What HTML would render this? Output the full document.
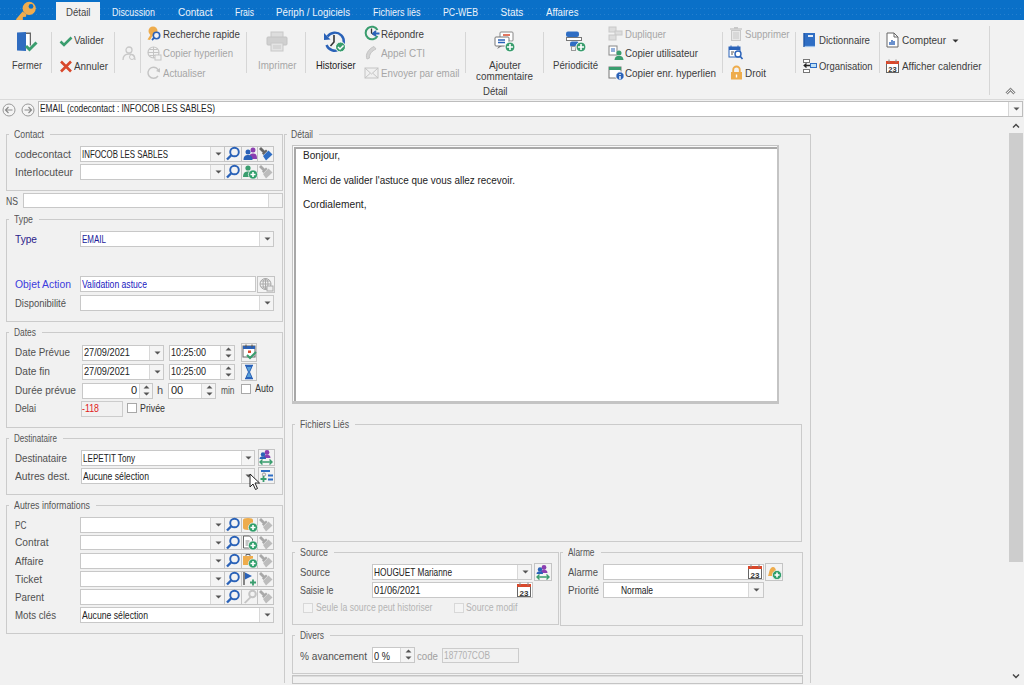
<!DOCTYPE html>
<html><head><meta charset="utf-8"><style>
html,body{margin:0;padding:0}
body{width:1024px;height:685px;overflow:hidden;position:relative;background:#f1f1f1;font-family:"Liberation Sans",sans-serif}
.a{position:absolute;display:block}
.t{position:absolute;white-space:nowrap;line-height:20px;transform-origin:0 0;font-family:"Liberation Sans",sans-serif}
</style></head><body>
<div class="a" style="left:0px;top:0px;width:1024px;height:20px;background:#0a70c8;"></div>
<div class="a" style="left:0px;top:8px;width:1024px;height:1px;background:repeating-linear-gradient(90deg,#2580cf 0 1px,transparent 1px 4px);"></div>
<div class="a" style="left:0px;top:14px;width:1024px;height:1px;background:repeating-linear-gradient(90deg,#2580cf 0 1px,transparent 1px 4px);"></div>
<div class="a" style="left:56px;top:2px;width:44px;height:18px;background:#f2f2f2;"></div>
<svg class="a" style="left:12px;top:0px" width="30" height="22" viewBox="0 0 30 22"><circle cx="17.2" cy="8.3" r="6.6" fill="#efac4e"/><circle cx="19" cy="6.4" r="2.4" fill="#0a70c8"/><path d="M10.6 11.5 L4.2 19 L4.2 21 L10.8 21 L10.9 17 L14 16.8 L14.3 14.3z" fill="#efac4e"/></svg>
<span class="t" style="left:65.5px;top:3px;font-size:10px;color:#444;transform:scaleX(0.9584);">Détail</span>
<span class="t" style="left:112px;top:3px;font-size:10px;color:#eef4fb;transform:scaleX(0.8895);">Discussion</span>
<span class="t" style="left:178px;top:3px;font-size:10px;color:#eef4fb;">Contact</span>
<span class="t" style="left:235px;top:3px;font-size:10px;color:#eef4fb;transform:scaleX(0.8551);">Frais</span>
<span class="t" style="left:276px;top:3px;font-size:10px;color:#eef4fb;transform:scaleX(0.9717);">Périph / Logiciels</span>
<span class="t" style="left:372.5px;top:3px;font-size:10px;color:#eef4fb;transform:scaleX(0.8999);">Fichiers liés</span>
<span class="t" style="left:442.5px;top:3px;font-size:10px;color:#eef4fb;transform:scaleX(0.8750);">PC-WEB</span>
<span class="t" style="left:500.5px;top:3px;font-size:10px;color:#eef4fb;">Stats</span>
<span class="t" style="left:545.5px;top:3px;font-size:10px;color:#eef4fb;transform:scaleX(0.9639);">Affaires</span>
<div class="a" style="left:0px;top:20px;width:1024px;height:79px;background:#f2f2f2;"></div>
<div class="a" style="left:0px;top:99px;width:1024px;height:1px;background:#dadada;"></div>
<div class="a" style="left:0px;top:100px;width:1024px;height:18px;background:#f1f1f1;"></div>
<div class="a" style="left:51px;top:32px;width:1px;height:41px;background:#d6d6d6;"></div>
<div class="a" style="left:114px;top:32px;width:1px;height:41px;background:#d6d6d6;"></div>
<div class="a" style="left:140px;top:32px;width:1px;height:41px;background:#d6d6d6;"></div>
<div class="a" style="left:246px;top:32px;width:1px;height:41px;background:#d6d6d6;"></div>
<div class="a" style="left:305px;top:32px;width:1px;height:41px;background:#d6d6d6;"></div>
<div class="a" style="left:465px;top:32px;width:1px;height:41px;background:#d6d6d6;"></div>
<div class="a" style="left:543px;top:32px;width:1px;height:41px;background:#d6d6d6;"></div>
<div class="a" style="left:722px;top:32px;width:1px;height:41px;background:#d6d6d6;"></div>
<div class="a" style="left:795px;top:32px;width:1px;height:41px;background:#d6d6d6;"></div>
<div class="a" style="left:879px;top:32px;width:1px;height:41px;background:#d6d6d6;"></div>
<div class="a" style="left:989px;top:26px;width:1px;height:69px;background:#d6d6d6;"></div>
<svg class="a" style="left:16px;top:31px" width="23" height="22" viewBox="0 0 23 22"><path d="M10 1.5h5v13h-1.5v-11.5h-3.5z" fill="#666"/><rect x="10" y="3" width="3.5" height="12" fill="#fff"/><path d="M1 1.5 L10 1 L10 20 L1 19.5z" fill="#2f6cc0"/><path d="M10 15 L13.5 18.5 L20.5 11.5" stroke="#3a9d6e" stroke-width="3" fill="none"/></svg>
<span class="t" style="left:12px;top:55px;font-size:11px;color:#3c3c3c;transform:scaleX(0.8466);">Fermer</span>
<svg class="a" style="left:59px;top:35px" width="14" height="12" viewBox="0 0 14 12"><path d="M1.5 6.5 L5 10 L12.5 2.5" stroke="#3a9d6e" stroke-width="2.6" fill="none"/></svg>
<span class="t" style="left:74px;top:30px;font-size:11px;color:#3c3c3c;transform:scaleX(0.8972);">Valider</span>
<svg class="a" style="left:59px;top:60px" width="14" height="13" viewBox="0 0 14 13"><path d="M2 1.5 L12 11.5 M12 1.5 L2 11.5" stroke="#d9482b" stroke-width="2.6" fill="none"/></svg>
<span class="t" style="left:74px;top:56px;font-size:11px;color:#3c3c3c;transform:scaleX(0.8962);">Annuler</span>
<svg class="a" style="left:121px;top:46px" width="16" height="15" viewBox="0 0 16 15"><circle cx="8" cy="4" r="3" fill="none" stroke="#c8c8c8" stroke-width="1.3"/><path d="M2 14 C2 9 5 8 8 8 C11 8 14 9 14 14" fill="none" stroke="#c8c8c8" stroke-width="1.3"/><circle cx="11" cy="11" r="2.5" fill="none" stroke="#c8c8c8"/></svg>
<svg class="a" style="left:147px;top:26px" width="15" height="15" viewBox="0 0 15 15"><circle cx="6" cy="5" r="4.5" fill="#eeac4c"/><path d="M4 8 L0.5 13.5 L3 14 L6 9z" fill="#eeac4c"/><circle cx="9.5" cy="9.5" r="3.2" fill="#f2f2f2" stroke="#2a62b8" stroke-width="1.6"/><path d="M7.3 11.7 L5 14" stroke="#2a62b8" stroke-width="1.8"/></svg>
<span class="t" style="left:163px;top:24px;font-size:11px;color:#3c3c3c;transform:scaleX(0.8863);">Recherche rapide</span>
<svg class="a" style="left:147px;top:46px" width="15" height="15" viewBox="0 0 15 15"><circle cx="6.5" cy="6.5" r="5.5" fill="none" stroke="#c4c4c4" stroke-width="1.2"/><path d="M6.5 1v11 M1 6.5h11 M2.5 3.5h8 M2.5 9.5h8" stroke="#c4c4c4"/><rect x="8" y="9" width="6" height="5" fill="#f2f2f2" stroke="#c4c4c4"/></svg>
<span class="t" style="left:163px;top:43px;font-size:11px;color:#a6a6a6;transform:scaleX(0.8736);">Copier hyperlien</span>
<svg class="a" style="left:147px;top:66px" width="15" height="15" viewBox="0 0 15 15"><path d="M12 6 A5.5 5.5 0 1 0 11 10" fill="none" stroke="#c4c4c4" stroke-width="1.4"/><path d="M9 5 L13 6.5 L13 2z" fill="#c4c4c4"/></svg>
<span class="t" style="left:163px;top:63px;font-size:11px;color:#a6a6a6;transform:scaleX(0.8797);">Actualiser</span>
<svg class="a" style="left:266px;top:31px" width="22" height="21" viewBox="0 0 22 21"><rect x="5" y="1" width="12" height="6" fill="#ddd" stroke="#c8c8c8"/><rect x="1" y="6" width="20" height="8" rx="1" fill="#d0d0d0" stroke="#c4c4c4"/><rect x="5" y="12" width="12" height="8" fill="#e4e4e4" stroke="#c8c8c8"/><path d="M7 15h8 M7 17h8" stroke="#c8c8c8"/></svg>
<span class="t" style="left:257.5px;top:55px;font-size:11px;color:#a6a6a6;transform:scaleX(0.8876);">Imprimer</span>
<svg class="a" style="left:323px;top:30px" width="24" height="24" viewBox="0 0 24 24"><path d="M4.5 6.5 A9 9 0 1 1 3.5 15" fill="none" stroke="#2a62b8" stroke-width="2.4"/><path d="M1 3 L7.5 9.5 L1 10z" fill="#2a62b8"/><path d="M11 5v7l-3.5 4" stroke="#333" stroke-width="1.6" fill="none"/><circle cx="17.5" cy="17" r="5" fill="#3a9d6e" stroke="#fff" stroke-width="1"/><path d="M15 17l2 2 3.5-3.5" stroke="#fff" stroke-width="1.5" fill="none"/></svg>
<span class="t" style="left:316px;top:55px;font-size:11px;color:#222;transform:scaleX(0.8506);">Historiser</span>
<svg class="a" style="left:364px;top:25px" width="16" height="16" viewBox="0 0 16 16"><path d="M13.5 5 A6.3 6.3 0 1 0 13.5 11" fill="none" stroke="#3a9d6e" stroke-width="2"/><path d="M7.5 3.5v4.5l2.5 2" stroke="#333" stroke-width="1.3" fill="none"/><path d="M15.5 8.5h-6 M12 6 L9 8.5 L12 11" stroke="#2a62b8" stroke-width="1.8" fill="none"/></svg>
<span class="t" style="left:381px;top:24px;font-size:11px;color:#3c3c3c;transform:scaleX(0.8895);">Répondre</span>
<svg class="a" style="left:364px;top:45px" width="16" height="16" viewBox="0 0 16 16"><path d="M3 14 C1 10 4 4 10 1.5 L12 4 C8 6 5 9 5.5 13z" fill="#d4d4d4" stroke="#c4c4c4"/></svg>
<span class="t" style="left:381px;top:43px;font-size:11px;color:#a6a6a6;transform:scaleX(0.8991);">Appel CTI</span>
<svg class="a" style="left:364px;top:66px" width="16" height="14" viewBox="0 0 16 14"><rect x="1" y="2" width="13" height="10" fill="#f0f0f0" stroke="#c4c4c4"/><path d="M1 2l6.5 6 6.5-6 M1 12l5-4.5 M14 12l-5-4.5" fill="none" stroke="#c4c4c4"/></svg>
<span class="t" style="left:381px;top:63px;font-size:11px;color:#a6a6a6;transform:scaleX(0.8851);">Envoyer par email</span>
<svg class="a" style="left:493px;top:30px" width="23" height="23" viewBox="0 0 23 23"><rect x="7" y="2" width="13" height="9" rx="1" fill="#fff" stroke="#888"/><path d="M10 5h7" stroke="#d9482b" stroke-width="1.5"/><rect x="2" y="7" width="14" height="9" rx="1" fill="#fff" stroke="#777"/><path d="M4 19l2-3h3z" fill="#777"/><path d="M5 10h7 M5 12.5h7" stroke="#2a62b8" stroke-width="1.3"/><circle cx="17" cy="17" r="5" fill="#3a9d6e" stroke="#fff"/><path d="M17 14v6 M14 17h6" stroke="#fff" stroke-width="1.6"/></svg>
<span class="t" style="left:489px;top:55px;font-size:11px;color:#3c3c3c;transform:scaleX(0.9176);">Ajouter</span>
<span class="t" style="left:476px;top:66px;font-size:11px;color:#3c3c3c;transform:scaleX(0.8963);">commentaire</span>
<span class="t" style="left:482.5px;top:81px;font-size:11px;color:#3c3c3c;transform:scaleX(0.8711);">Détail</span>
<svg class="a" style="left:564px;top:30px" width="23" height="23" viewBox="0 0 23 23"><rect x="2" y="1.5" width="13" height="5.5" rx="2" fill="#2f6ec4"/><rect x="2.5" y="7.5" width="15" height="3" fill="#fff" stroke="#777"/><rect x="6" y="11.5" width="9" height="5.5" rx="2" fill="#2f6ec4"/><rect x="7.5" y="16.5" width="4" height="4" fill="none" stroke="#999"/><circle cx="17" cy="17" r="5" fill="#3a9d6e" stroke="#fff"/><path d="M17 14v6 M14 17h6" stroke="#fff" stroke-width="1.6"/></svg>
<span class="t" style="left:553px;top:55px;font-size:11px;color:#3c3c3c;transform:scaleX(0.8759);">Périodicité</span>
<svg class="a" style="left:608px;top:26px" width="16" height="15" viewBox="0 0 16 15"><rect x="1" y="1" width="7" height="5" fill="#ddd" stroke="#c8c8c8"/><rect x="7" y="5" width="7" height="4" fill="#ddd" stroke="#c8c8c8"/><rect x="1" y="9" width="7" height="5" fill="#ddd" stroke="#c8c8c8"/></svg>
<span class="t" style="left:624.5px;top:24px;font-size:11px;color:#a6a6a6;transform:scaleX(0.8706);">Dupliquer</span>
<svg class="a" style="left:608px;top:45px" width="16" height="16" viewBox="0 0 16 16"><rect x="1" y="1" width="8" height="9" fill="#fff" stroke="#888"/><path d="M3 4h4M3 6h4" stroke="#2a62b8"/><circle cx="11" cy="8" r="2.5" fill="#3a9d6e"/><path d="M6.5 15 C7 11 9 11 11 11 C13 11 15 11 15.5 15z" fill="#3a9d6e"/></svg>
<span class="t" style="left:624.5px;top:43px;font-size:11px;color:#3c3c3c;transform:scaleX(0.8842);">Copier utilisateur</span>
<svg class="a" style="left:608px;top:65px" width="17" height="16" viewBox="0 0 17 16"><rect x="1" y="2" width="12" height="11" fill="#fff" stroke="#777"/><rect x="1" y="2" width="12" height="3" fill="#3a9d6e"/><circle cx="12" cy="11" r="4.2" fill="#2a62b8" stroke="#fff"/><path d="M12 9v1 M12 11v3" stroke="#fff" stroke-width="1.4"/></svg>
<span class="t" style="left:624.5px;top:63px;font-size:11px;color:#3c3c3c;transform:scaleX(0.8961);">Copier enr. hyperlien</span>
<svg class="a" style="left:729px;top:26px" width="14" height="15" viewBox="0 0 14 15"><path d="M1 3h12" stroke="#c8c8c8" stroke-width="1.4"/><rect x="5" y="1" width="4" height="2" fill="#c8c8c8"/><rect x="2.5" y="4.5" width="9" height="10" fill="#e8e8e8" stroke="#c8c8c8"/><path d="M5 6v7 M7 6v7 M9 6v7" stroke="#c8c8c8"/></svg>
<span class="t" style="left:745px;top:24px;font-size:11px;color:#a6a6a6;transform:scaleX(0.8768);">Supprimer</span>
<svg class="a" style="left:728px;top:45px" width="16" height="15" viewBox="0 0 16 15"><rect x="1" y="2" width="11" height="10" fill="#fff" stroke="#2a62b8"/><rect x="1" y="2" width="11" height="3" fill="#2a62b8"/><path d="M3 0.5v3 M10 0.5v3" stroke="#2a62b8"/><path d="M3 7h3 M3 9h2" stroke="#555"/><circle cx="10" cy="9" r="3" fill="#fff" stroke="#2a62b8" stroke-width="1.4"/><path d="M12 11l2.5 3" stroke="#2a62b8" stroke-width="1.6"/></svg>
<svg class="a" style="left:730px;top:65px" width="13" height="15" viewBox="0 0 13 15"><path d="M3.2 7V4.8a3.3 3.3 0 0 1 6.6 0V7" fill="none" stroke="#eeac4c" stroke-width="1.8"/><rect x="1" y="7" width="11" height="7.5" fill="#eeac4c"/><path d="M6.5 9.5v3" stroke="#fff" stroke-width="1.4"/></svg>
<span class="t" style="left:745px;top:63px;font-size:11px;color:#3c3c3c;transform:scaleX(0.9044);">Droit</span>
<svg class="a" style="left:802px;top:32px" width="14" height="16" viewBox="0 0 14 16"><rect x="2" y="1" width="11" height="13" fill="#2f6ec4"/><path d="M2.5 14.5h10.5" stroke="#9cc0ea" stroke-width="1.2"/><path d="M2 1v14" stroke="#1f57a8" stroke-width="1.4"/><rect x="6" y="3" width="5" height="2" fill="#dfeaf8"/></svg>
<span class="t" style="left:818.5px;top:30px;font-size:11px;color:#3c3c3c;transform:scaleX(0.8779);">Dictionnaire</span>
<svg class="a" style="left:802px;top:58px" width="15" height="16" viewBox="0 0 15 16"><rect x="1.5" y="1.5" width="6" height="3" fill="#fff" stroke="#777"/><rect x="1.5" y="11.5" width="6" height="3" fill="#fff" stroke="#777"/><rect x="8.5" y="5.5" width="6" height="4" fill="#bfe0f5" stroke="#2f6ec4"/><path d="M8 7.5H2.5 M4.5 5.5L2.2 7.5 4.5 9.5" stroke="#222" stroke-width="1.3" fill="none"/></svg>
<span class="t" style="left:818.5px;top:56px;font-size:11px;color:#3c3c3c;transform:scaleX(0.8573);">Organisation</span>
<svg class="a" style="left:886px;top:32px" width="13" height="16" viewBox="0 0 13 16"><path d="M1 1h7l4 4v10H1z" fill="#fff" stroke="#666"/><path d="M8 1v4h4" fill="none" stroke="#666"/><path d="M4 13v-3 M6 13v-5 M8 13v-4" stroke="#2a62b8" stroke-width="1.4"/></svg>
<span class="t" style="left:901.5px;top:30px;font-size:11px;color:#3c3c3c;transform:scaleX(0.9107);">Compteur</span>
<svg class="a" style="left:952px;top:39px" width="7" height="4" viewBox="0 0 7 4"><path d="M0.5 0.5h6l-3 3z" fill="#333"/></svg>
<svg class="a" style="left:885px;top:59px" width="15" height="15" viewBox="0 0 15 15"><rect x="1.5" y="2.5" width="12" height="11" fill="#fff" stroke="#666"/><rect x="1" y="2" width="13" height="3" fill="#d9482b"/><path d="M4 0.5v3 M11 0.5v3" stroke="#888"/><text x="7.5" y="12.6" font-size="7.5" font-weight="bold" font-family="Liberation Sans" text-anchor="middle" fill="#333">23</text></svg>
<span class="t" style="left:901.5px;top:56px;font-size:11px;color:#3c3c3c;transform:scaleX(0.8985);">Afficher calendrier</span>
<svg class="a" style="left:1005px;top:86px" width="11" height="10" viewBox="0 0 11 10"><path d="M1.5 7.5l4-4 4 4" stroke="#8a8a8a" stroke-width="3" fill="none"/><path d="M1.5 7.5l4-4 4 4" stroke="#f2f2f2" stroke-width="1" fill="none"/></svg>
<svg class="a" style="left:2px;top:102.5px" width="14" height="14" viewBox="0 0 14 14"><circle cx="7" cy="7" r="6" fill="#f4f4f4" stroke="#9a9a9a"/><path d="M10.5 7h-7 M6.5 4l-3 3 3 3" stroke="#8a8a8a" stroke-width="1.2" fill="none"/></svg>
<svg class="a" style="left:21px;top:103px" width="14" height="14" viewBox="0 0 14 14"><circle cx="7" cy="7" r="6" fill="#f4f4f4" stroke="#9a9a9a"/><path d="M3.5 7h7 M7.5 4l3 3-3 3" stroke="#8a8a8a" stroke-width="1.2" fill="none"/></svg>
<div class="a" style="left:38px;top:101px;width:985px;height:16px;background:#fff;box-shadow:inset 0 0 0 1px #bdbdbd;"></div>
<div class="a" style="left:1009px;top:102px;width:13px;height:14px;background:#f6f6f6;"></div>
<div class="a" style="left:1008px;top:102px;width:1px;height:14px;background:#d6d6d6;"></div>
<svg class="a" style="left:1013px;top:107px" width="7" height="4" viewBox="0 0 7 4"><path d="M0.5 0.5h6l-3 3z" fill="#555"/></svg>
<span class="t" style="left:40px;top:99px;font-size:10px;color:#222;transform:scaleX(0.8321);">EMAIL (codecontact : INFOCOB LES SABLES)</span>
<div class="a" style="left:0px;top:117px;width:1009px;height:568px;background:#f1f1f1;"></div>
<div class="a" style="left:1009px;top:117px;width:15px;height:568px;background:#f1f1f1;"></div>
<div class="a" style="left:1009px;top:133px;width:14px;height:429px;background:#cdcdcd;"></div>
<svg class="a" style="left:1012px;top:122px" width="8" height="7" viewBox="0 0 8 7"><path d="M1 5.5l3-3 3 3" stroke="#444" stroke-width="1.4" fill="none"/></svg>
<svg class="a" style="left:1012px;top:673px" width="8" height="7" viewBox="0 0 8 7"><path d="M1 1.5l3 3 3-3" stroke="#444" stroke-width="1.4" fill="none"/></svg>
<div class="a" style="left:6px;top:134px;width:277px;height:57px;box-shadow:inset 0 0 0 1px #cbcbcb;"></div>
<div class="a" style="left:9px;top:134px;width:41px;height:1px;background:#f1f1f1;"></div>
<span class="t" style="left:14px;top:125px;font-size:10px;color:#555;transform:scaleX(0.8704);">Contact</span>
<span class="t" style="left:15px;top:144px;font-size:11px;color:#505050;transform:scaleX(0.9432);">codecontact</span>
<div class="a" style="left:80px;top:146px;width:145px;height:16px;background:#fff;box-shadow:inset 0 0 0 1px #c8c8c8;"></div>
<div class="a" style="left:210px;top:147px;width:14px;height:14px;background:#f4f4f4;"></div>
<div class="a" style="left:210px;top:147px;width:1px;height:14px;background:#d8d8d8;"></div>
<svg class="a" style="left:215px;top:152px" width="7" height="4" viewBox="0 0 7 4"><path d="M0.5 0.5h6l-3 3z" fill="#555"/></svg>
<div class="a" style="left:224px;top:146px;width:18px;height:16px;background:#f3f3f3;box-shadow:inset 0 0 0 1px #c4c4c4;"></div>
<div class="a" style="left:241px;top:146px;width:17px;height:16px;background:#f3f3f3;box-shadow:inset 0 0 0 1px #c4c4c4;"></div>
<div class="a" style="left:257px;top:146px;width:17px;height:16px;background:#f3f3f3;box-shadow:inset 0 0 0 1px #c4c4c4;"></div>
<svg class="a" style="left:225px;top:146px" width="16" height="15" viewBox="0 0 16 15"><circle cx="9.5" cy="6" r="4.3" fill="none" stroke="#2a62b8" stroke-width="1.9"/><path d="M6.5 9 L2 13.5" stroke="#2a62b8" stroke-width="2.4"/></svg>
<svg class="a" style="left:242px;top:146px" width="16" height="15" viewBox="0 0 16 15"><circle cx="11" cy="4" r="2.5" fill="#8b3fb0"/><path d="M7 13 C7 8 9 7.5 11 7.5 C13 7.5 15 8 15 13z" fill="#8b3fb0"/><circle cx="6" cy="6" r="2.5" fill="#2a62b8"/><path d="M1.5 14 C1.5 10 3.5 9 6 9 C8.5 9 10.5 10 10.5 14z" fill="#2a62b8"/></svg>
<svg class="a" style="left:258px;top:146px" width="16" height="15" viewBox="0 0 16 15"><path d="M1 3 L3 1 L7.5 5.5 L5.5 7.5z" fill="#666"/><path d="M4 7.5 L8 3.5 L9.5 5 L5.5 9z" fill="#666"/><path d="M5 10 L10.5 4.5 L14.5 8.5 L8 14.5z" fill="#2f6ec4"/></svg>
<span class="t" style="left:82px;top:144px;font-size:11px;color:#222;transform:scaleX(0.7172);">INFOCOB LES SABLES</span>
<span class="t" style="left:15px;top:162px;font-size:11px;color:#505050;transform:scaleX(0.9479);">Interlocuteur</span>
<div class="a" style="left:80px;top:164px;width:145px;height:16px;background:#fff;box-shadow:inset 0 0 0 1px #c8c8c8;"></div>
<div class="a" style="left:210px;top:165px;width:14px;height:14px;background:#f4f4f4;"></div>
<div class="a" style="left:210px;top:165px;width:1px;height:14px;background:#d8d8d8;"></div>
<svg class="a" style="left:215px;top:170px" width="7" height="4" viewBox="0 0 7 4"><path d="M0.5 0.5h6l-3 3z" fill="#555"/></svg>
<div class="a" style="left:224px;top:164px;width:18px;height:16px;background:#f3f3f3;box-shadow:inset 0 0 0 1px #c4c4c4;"></div>
<div class="a" style="left:241px;top:164px;width:17px;height:16px;background:#f3f3f3;box-shadow:inset 0 0 0 1px #c4c4c4;"></div>
<div class="a" style="left:257px;top:164px;width:17px;height:16px;background:#f3f3f3;box-shadow:inset 0 0 0 1px #c4c4c4;"></div>
<svg class="a" style="left:225px;top:164px" width="16" height="15" viewBox="0 0 16 15"><circle cx="9.5" cy="6" r="4.3" fill="none" stroke="#2a62b8" stroke-width="1.9"/><path d="M6.5 9 L2 13.5" stroke="#2a62b8" stroke-width="2.4"/></svg>
<svg class="a" style="left:242px;top:164px" width="16" height="15" viewBox="0 0 16 15"><circle cx="6" cy="4" r="2.6" fill="#3a9d6e"/><path d="M1 13 C1 8.5 3.5 7.5 6 7.5 C8 7.5 9 8 9.5 9 L8 13z" fill="#3a9d6e"/><circle cx="11" cy="10.5" r="4.6" fill="#2e9e6a" stroke="#f3f3f3" stroke-width="0.8"/><path d="M11 8v5 M8.5 10.5h5" stroke="#fff" stroke-width="1.6"/></svg>
<svg class="a" style="left:258px;top:164px" width="16" height="15" viewBox="0 0 16 15"><path d="M1 3 L3 1 L7.5 5.5 L5.5 7.5z" fill="#a8a8a8"/><path d="M4 7.5 L8 3.5 L9.5 5 L5.5 9z" fill="#a8a8a8"/><path d="M5 10 L10.5 4.5 L14.5 8.5 L8 14.5z" fill="#bcbcbc"/></svg>
<span class="t" style="left:6px;top:191px;font-size:11px;color:#505050;transform:scaleX(0.7853);">NS</span>
<div class="a" style="left:23px;top:193px;width:260px;height:15px;background:#fff;box-shadow:inset 0 0 0 1px #c8c8c8;"></div>
<div class="a" style="left:268px;top:194px;width:14px;height:13px;background:#f4f4f4;"></div>
<div class="a" style="left:268px;top:194px;width:1px;height:13px;background:#d8d8d8;"></div>
<div class="a" style="left:6px;top:219px;width:277px;height:103px;box-shadow:inset 0 0 0 1px #cbcbcb;"></div>
<div class="a" style="left:9px;top:219px;width:30px;height:1px;background:#f1f1f1;"></div>
<span class="t" style="left:14px;top:210px;font-size:10px;color:#555;transform:scaleX(0.8761);">Type</span>
<span class="t" style="left:15px;top:229px;font-size:11px;color:#2a1a8a;transform:scaleX(0.9221);">Type</span>
<div class="a" style="left:80px;top:231px;width:194px;height:16px;background:#fff;box-shadow:inset 0 0 0 1px #c8c8c8;"></div>
<div class="a" style="left:259px;top:232px;width:14px;height:14px;background:#f4f4f4;"></div>
<div class="a" style="left:259px;top:232px;width:1px;height:14px;background:#d8d8d8;"></div>
<svg class="a" style="left:264px;top:237px" width="7" height="4" viewBox="0 0 7 4"><path d="M0.5 0.5h6l-3 3z" fill="#555"/></svg>
<span class="t" style="left:82px;top:229px;font-size:11px;color:#1a1a9a;transform:scaleX(0.7266);">EMAIL</span>
<span class="t" style="left:15px;top:274px;font-size:11px;color:#3b3bdd;transform:scaleX(0.9434);">Objet Action</span>
<div class="a" style="left:80px;top:276px;width:176px;height:16px;background:#fff;box-shadow:inset 0 0 0 1px #c8c8c8;"></div>
<span class="t" style="left:82px;top:274px;font-size:11px;color:#2020c0;transform:scaleX(0.7828);">Validation astuce</span>
<div class="a" style="left:257px;top:276px;width:18px;height:17px;background:#f3f3f3;box-shadow:inset 0 0 0 1px #c4c4c4;"></div>
<svg class="a" style="left:258px;top:277px" width="16" height="15" viewBox="0 0 16 15"><circle cx="7.5" cy="7" r="5.5" fill="none" stroke="#aaa"/><path d="M7.5 1.5v11 M2 7h11 M3 4h9 M3 10h9" stroke="#aaa" fill="none"/><ellipse cx="7.5" cy="7" rx="2.5" ry="5.5" fill="none" stroke="#aaa"/><rect x="9" y="9" width="6" height="5" fill="#ededed" stroke="#aaa"/></svg>
<span class="t" style="left:15px;top:293px;font-size:11px;color:#505050;transform:scaleX(0.8599);">Disponibilité</span>
<div class="a" style="left:80px;top:295px;width:194px;height:16px;background:#fff;box-shadow:inset 0 0 0 1px #c8c8c8;"></div>
<div class="a" style="left:259px;top:296px;width:14px;height:14px;background:#f4f4f4;"></div>
<div class="a" style="left:259px;top:296px;width:1px;height:14px;background:#d8d8d8;"></div>
<svg class="a" style="left:264px;top:301px" width="7" height="4" viewBox="0 0 7 4"><path d="M0.5 0.5h6l-3 3z" fill="#555"/></svg>
<div class="a" style="left:6px;top:332px;width:277px;height:96px;box-shadow:inset 0 0 0 1px #cbcbcb;"></div>
<div class="a" style="left:9px;top:332px;width:33px;height:1px;background:#f1f1f1;"></div>
<span class="t" style="left:14px;top:323px;font-size:10px;color:#555;transform:scaleX(0.8421);">Dates</span>
<span class="t" style="left:15px;top:342px;font-size:11px;color:#505050;transform:scaleX(0.8989);">Date Prévue</span>
<div class="a" style="left:82px;top:345px;width:82px;height:16px;background:#fff;box-shadow:inset 0 0 0 1px #c8c8c8;"></div>
<div class="a" style="left:149px;top:346px;width:14px;height:14px;background:#f4f4f4;"></div>
<div class="a" style="left:149px;top:346px;width:1px;height:14px;background:#d8d8d8;"></div>
<svg class="a" style="left:154px;top:351px" width="7" height="4" viewBox="0 0 7 4"><path d="M0.5 0.5h6l-3 3z" fill="#555"/></svg>
<span class="t" style="left:84px;top:342px;font-size:11px;color:#222;transform:scaleX(0.8345);">27/09/2021</span>
<div class="a" style="left:169px;top:345px;width:66px;height:16px;background:#fff;box-shadow:inset 0 0 0 1px #c8c8c8;"></div>
<div class="a" style="left:220px;top:346px;width:14px;height:14px;background:#f4f4f4;"></div>
<div class="a" style="left:220px;top:346px;width:1px;height:14px;background:#d8d8d8;"></div>
<svg class="a" style="left:225px;top:347px" width="7" height="11" viewBox="0 0 7 11"><path d="M0.5 3.5h6l-3-3z M0.5 7.5h6l-3 3z" fill="#555"/></svg>
<span class="t" style="left:171px;top:342px;font-size:11px;color:#222;transform:scaleX(0.8163);">10:25:00</span>
<div class="a" style="left:241px;top:343px;width:16px;height:19px;background:#f3f3f3;box-shadow:inset 0 0 0 1px #c4c4c4;"></div>
<svg class="a" style="left:241px;top:344px" width="16" height="16" viewBox="0 0 16 16"><rect x="2" y="2" width="12" height="11" fill="#fff" stroke="#666"/><rect x="2" y="2" width="12" height="3" fill="#2a62b8"/><path d="M5 0.5v3 M11 0.5v3" stroke="#555"/><rect x="7" y="6.5" width="3" height="2.5" fill="#d9482b"/><path d="M6 11l3 3 6-6" stroke="#3a9d6e" stroke-width="2" fill="none"/></svg>
<span class="t" style="left:15px;top:361px;font-size:11px;color:#505050;transform:scaleX(0.9226);">Date fin</span>
<div class="a" style="left:82px;top:364px;width:82px;height:16px;background:#fff;box-shadow:inset 0 0 0 1px #c8c8c8;"></div>
<div class="a" style="left:149px;top:365px;width:14px;height:14px;background:#f4f4f4;"></div>
<div class="a" style="left:149px;top:365px;width:1px;height:14px;background:#d8d8d8;"></div>
<svg class="a" style="left:154px;top:370px" width="7" height="4" viewBox="0 0 7 4"><path d="M0.5 0.5h6l-3 3z" fill="#555"/></svg>
<span class="t" style="left:84px;top:361px;font-size:11px;color:#222;transform:scaleX(0.8345);">27/09/2021</span>
<div class="a" style="left:169px;top:364px;width:66px;height:16px;background:#fff;box-shadow:inset 0 0 0 1px #c8c8c8;"></div>
<div class="a" style="left:220px;top:365px;width:14px;height:14px;background:#f4f4f4;"></div>
<div class="a" style="left:220px;top:365px;width:1px;height:14px;background:#d8d8d8;"></div>
<svg class="a" style="left:225px;top:366px" width="7" height="11" viewBox="0 0 7 11"><path d="M0.5 3.5h6l-3-3z M0.5 7.5h6l-3 3z" fill="#555"/></svg>
<span class="t" style="left:171px;top:361px;font-size:11px;color:#222;transform:scaleX(0.8163);">10:25:00</span>
<div class="a" style="left:241px;top:363px;width:16px;height:18px;background:#f3f3f3;box-shadow:inset 0 0 0 1px #c4c4c4;"></div>
<svg class="a" style="left:241px;top:364px" width="16" height="16" viewBox="0 0 16 16"><path d="M4 1.5h8 M4 14.5h8" stroke="#2a62b8" stroke-width="1.6"/><path d="M5 2.5h6 L8.5 8 L11 13.5H5L7.5 8z" fill="#5aa0d8" stroke="#2a62b8"/></svg>
<span class="t" style="left:15px;top:380px;font-size:11px;color:#505050;transform:scaleX(0.9147);">Durée prévue</span>
<div class="a" style="left:82px;top:383px;width:71px;height:16px;background:#fff;box-shadow:inset 0 0 0 1px #c8c8c8;"></div>
<div class="a" style="left:139px;top:384px;width:13px;height:14px;background:#f4f4f4;"></div>
<div class="a" style="left:139px;top:384px;width:1px;height:14px;background:#d8d8d8;"></div>
<svg class="a" style="left:143px;top:385px" width="7" height="11" viewBox="0 0 7 11"><path d="M0.5 3.5h6l-3-3z M0.5 7.5h6l-3 3z" fill="#555"/></svg>
<span class="t" style="left:131px;top:380px;font-size:11px;color:#222;">0</span>
<span class="t" style="left:157px;top:380px;font-size:11px;color:#505050;">h</span>
<div class="a" style="left:168px;top:383px;width:48px;height:16px;background:#fff;box-shadow:inset 0 0 0 1px #c8c8c8;"></div>
<div class="a" style="left:201px;top:384px;width:14px;height:14px;background:#f4f4f4;"></div>
<div class="a" style="left:201px;top:384px;width:1px;height:14px;background:#d8d8d8;"></div>
<svg class="a" style="left:206px;top:385px" width="7" height="11" viewBox="0 0 7 11"><path d="M0.5 3.5h6l-3-3z M0.5 7.5h6l-3 3z" fill="#555"/></svg>
<span class="t" style="left:171px;top:380px;font-size:11px;color:#222;">00</span>
<span class="t" style="left:220.5px;top:381px;font-size:10px;color:#505050;transform:scaleX(0.8380);">min</span>
<div class="a" style="left:241px;top:384px;width:10px;height:10px;background:#fff;box-shadow:inset 0 0 0 1px #a8a8a8;"></div>
<span class="t" style="left:255px;top:379px;font-size:10px;color:#333;transform:scaleX(0.8990);">Auto</span>
<span class="t" style="left:15px;top:398px;font-size:11px;color:#505050;transform:scaleX(0.8379);">Delai</span>
<div class="a" style="left:81px;top:401px;width:42px;height:16px;background:#f1f1f1;box-shadow:inset 0 0 0 1px #cccccc;"></div>
<span class="t" style="left:82px;top:398px;font-size:11px;color:#e02020;transform:scaleX(0.8012);">-118</span>
<div class="a" style="left:127px;top:403px;width:10px;height:10px;background:#fff;box-shadow:inset 0 0 0 1px #a8a8a8;"></div>
<span class="t" style="left:140px;top:399px;font-size:10px;color:#333;transform:scaleX(0.8820);">Privée</span>
<div class="a" style="left:6px;top:438px;width:277px;height:57px;box-shadow:inset 0 0 0 1px #cbcbcb;"></div>
<div class="a" style="left:9px;top:438px;width:54px;height:1px;background:#f1f1f1;"></div>
<span class="t" style="left:14px;top:429px;font-size:10px;color:#555;transform:scaleX(0.8059);">Destinataire</span>
<span class="t" style="left:15px;top:448px;font-size:11px;color:#505050;transform:scaleX(0.8856);">Destinataire</span>
<div class="a" style="left:81px;top:450px;width:174px;height:16px;background:#fff;box-shadow:inset 0 0 0 1px #c8c8c8;"></div>
<div class="a" style="left:241px;top:451px;width:13px;height:14px;background:#f4f4f4;"></div>
<div class="a" style="left:241px;top:451px;width:1px;height:14px;background:#d8d8d8;"></div>
<svg class="a" style="left:245px;top:456px" width="7" height="4" viewBox="0 0 7 4"><path d="M0.5 0.5h6l-3 3z" fill="#555"/></svg>
<span class="t" style="left:83px;top:448px;font-size:11px;color:#222;transform:scaleX(0.7369);">LEPETIT Tony</span>
<div class="a" style="left:258px;top:449px;width:17px;height:17px;background:#f3f3f3;box-shadow:inset 0 0 0 1px #c4c4c4;"></div>
<svg class="a" style="left:258px;top:449px" width="16" height="16" viewBox="0 0 16 16"><circle cx="9" cy="3.5" r="2.4" fill="#8b3fb0"/><path d="M5.5 9 C5.5 6.5 7 6 9 6 C11 6 12.5 6.5 12.5 9z" fill="#8b3fb0"/><circle cx="5" cy="5.5" r="2.2" fill="#2a62b8"/><path d="M1.5 10 C1.5 8 3 7.5 5 7.5 C7 7.5 8 8 8 10z" fill="#2a62b8"/><path d="M2 13h12 M4.5 10.5L2 13l2.5 2.5 M11.5 10.5L14 13l-2.5 2.5" stroke="#3a9d6e" stroke-width="1.4" fill="none"/></svg>
<span class="t" style="left:15px;top:466px;font-size:11px;color:#505050;transform:scaleX(0.9362);">Autres dest.</span>
<div class="a" style="left:81px;top:468px;width:174px;height:16px;background:#fff;box-shadow:inset 0 0 0 1px #c8c8c8;"></div>
<div class="a" style="left:241px;top:469px;width:13px;height:14px;background:#f4f4f4;"></div>
<div class="a" style="left:241px;top:469px;width:1px;height:14px;background:#d8d8d8;"></div>
<svg class="a" style="left:245px;top:474px" width="7" height="4" viewBox="0 0 7 4"><path d="M0.5 0.5h6l-3 3z" fill="#555"/></svg>
<span class="t" style="left:83px;top:466px;font-size:11px;color:#222;transform:scaleX(0.7872);">Aucune sélection</span>
<div class="a" style="left:258px;top:467px;width:17px;height:17px;background:#f3f3f3;box-shadow:inset 0 0 0 1px #c4c4c4;"></div>
<svg class="a" style="left:259px;top:467px" width="16" height="16" viewBox="0 0 16 16"><path d="M2 4h9" stroke="#2f6ec4" stroke-width="2"/><circle cx="5" cy="7.5" r="1.6" fill="none" stroke="#999"/><path d="M9 8.5h5 M9 12.5h5" stroke="#2f6ec4" stroke-width="2.2"/><path d="M4.5 9v6 M1.5 12h6" stroke="#3a9d6e" stroke-width="1.8"/></svg>
<svg class="a" style="left:249px;top:473px" width="11" height="18" viewBox="0 0 11 18"><path d="M1 1v13l3-3 2.5 5.5 2-1L6 10h4.5z" fill="#fff" stroke="#222" stroke-width="1"/></svg>
<div class="a" style="left:6px;top:505px;width:277px;height:129px;box-shadow:inset 0 0 0 1px #cbcbcb;"></div>
<div class="a" style="left:9px;top:505px;width:87px;height:1px;background:#f1f1f1;"></div>
<span class="t" style="left:14px;top:496px;font-size:10px;color:#555;transform:scaleX(0.8821);">Autres informations</span>
<span class="t" style="left:15px;top:515px;font-size:11px;color:#505050;transform:scaleX(0.7526);">PC</span>
<div class="a" style="left:80px;top:517px;width:145px;height:16px;background:#fff;box-shadow:inset 0 0 0 1px #c8c8c8;"></div>
<div class="a" style="left:210px;top:518px;width:14px;height:14px;background:#f4f4f4;"></div>
<div class="a" style="left:210px;top:518px;width:1px;height:14px;background:#d8d8d8;"></div>
<svg class="a" style="left:215px;top:523px" width="7" height="4" viewBox="0 0 7 4"><path d="M0.5 0.5h6l-3 3z" fill="#555"/></svg>
<div class="a" style="left:224px;top:517px;width:18px;height:16px;background:#f3f3f3;box-shadow:inset 0 0 0 1px #c4c4c4;"></div>
<div class="a" style="left:241px;top:517px;width:17px;height:16px;background:#f3f3f3;box-shadow:inset 0 0 0 1px #c4c4c4;"></div>
<div class="a" style="left:257px;top:517px;width:17px;height:16px;background:#f3f3f3;box-shadow:inset 0 0 0 1px #c4c4c4;"></div>
<svg class="a" style="left:225px;top:517px" width="16" height="15" viewBox="0 0 16 15"><circle cx="9.5" cy="6" r="4.3" fill="none" stroke="#2a62b8" stroke-width="1.9"/><path d="M6.5 9 L2 13.5" stroke="#2a62b8" stroke-width="2.4"/></svg>
<svg class="a" style="left:242px;top:517px" width="16" height="15" viewBox="0 0 16 15"><ellipse cx="6" cy="3" rx="5" ry="2" fill="#eeac4c"/><path d="M1 3v8c0 1 2 2 5 2s5-1 5-2V3" fill="#eeac4c"/><circle cx="11" cy="10.5" r="4.6" fill="#2e9e6a" stroke="#f3f3f3" stroke-width="0.8"/><path d="M11 8v5 M8.5 10.5h5" stroke="#fff" stroke-width="1.6"/></svg>
<svg class="a" style="left:258px;top:517px" width="16" height="15" viewBox="0 0 16 15"><path d="M1 3 L3 1 L7.5 5.5 L5.5 7.5z" fill="#a8a8a8"/><path d="M4 7.5 L8 3.5 L9.5 5 L5.5 9z" fill="#a8a8a8"/><path d="M5 10 L10.5 4.5 L14.5 8.5 L8 14.5z" fill="#bcbcbc"/></svg>
<span class="t" style="left:15px;top:532px;font-size:11px;color:#505050;transform:scaleX(0.9281);">Contrat</span>
<div class="a" style="left:80px;top:535px;width:145px;height:15px;background:#fff;box-shadow:inset 0 0 0 1px #c8c8c8;"></div>
<div class="a" style="left:210px;top:536px;width:14px;height:13px;background:#f4f4f4;"></div>
<div class="a" style="left:210px;top:536px;width:1px;height:13px;background:#d8d8d8;"></div>
<svg class="a" style="left:215px;top:541px" width="7" height="4" viewBox="0 0 7 4"><path d="M0.5 0.5h6l-3 3z" fill="#555"/></svg>
<div class="a" style="left:224px;top:535px;width:18px;height:15px;background:#f3f3f3;box-shadow:inset 0 0 0 1px #c4c4c4;"></div>
<div class="a" style="left:241px;top:535px;width:17px;height:15px;background:#f3f3f3;box-shadow:inset 0 0 0 1px #c4c4c4;"></div>
<div class="a" style="left:257px;top:535px;width:17px;height:15px;background:#f3f3f3;box-shadow:inset 0 0 0 1px #c4c4c4;"></div>
<svg class="a" style="left:225px;top:535px" width="16" height="15" viewBox="0 0 16 15"><circle cx="9.5" cy="6" r="4.3" fill="none" stroke="#2a62b8" stroke-width="1.9"/><path d="M6.5 9 L2 13.5" stroke="#2a62b8" stroke-width="2.4"/></svg>
<svg class="a" style="left:242px;top:535px" width="16" height="15" viewBox="0 0 16 15"><path d="M1.5 1h6l3 3v9h-9z" fill="#fff" stroke="#666"/><path d="M3.5 6h4 M3.5 8h3 M3.5 10h3" stroke="#888"/><circle cx="11" cy="10.5" r="4.6" fill="#2e9e6a" stroke="#f3f3f3" stroke-width="0.8"/><path d="M11 8v5 M8.5 10.5h5" stroke="#fff" stroke-width="1.6"/></svg>
<svg class="a" style="left:258px;top:535px" width="16" height="15" viewBox="0 0 16 15"><path d="M1 3 L3 1 L7.5 5.5 L5.5 7.5z" fill="#a8a8a8"/><path d="M4 7.5 L8 3.5 L9.5 5 L5.5 9z" fill="#a8a8a8"/><path d="M5 10 L10.5 4.5 L14.5 8.5 L8 14.5z" fill="#bcbcbc"/></svg>
<span class="t" style="left:15px;top:551px;font-size:11px;color:#505050;transform:scaleX(0.9016);">Affaire</span>
<div class="a" style="left:80px;top:553px;width:145px;height:16px;background:#fff;box-shadow:inset 0 0 0 1px #c8c8c8;"></div>
<div class="a" style="left:210px;top:554px;width:14px;height:14px;background:#f4f4f4;"></div>
<div class="a" style="left:210px;top:554px;width:1px;height:14px;background:#d8d8d8;"></div>
<svg class="a" style="left:215px;top:559px" width="7" height="4" viewBox="0 0 7 4"><path d="M0.5 0.5h6l-3 3z" fill="#555"/></svg>
<div class="a" style="left:224px;top:553px;width:18px;height:16px;background:#f3f3f3;box-shadow:inset 0 0 0 1px #c4c4c4;"></div>
<div class="a" style="left:241px;top:553px;width:17px;height:16px;background:#f3f3f3;box-shadow:inset 0 0 0 1px #c4c4c4;"></div>
<div class="a" style="left:257px;top:553px;width:17px;height:16px;background:#f3f3f3;box-shadow:inset 0 0 0 1px #c4c4c4;"></div>
<svg class="a" style="left:225px;top:553px" width="16" height="15" viewBox="0 0 16 15"><circle cx="9.5" cy="6" r="4.3" fill="none" stroke="#2a62b8" stroke-width="1.9"/><path d="M6.5 9 L2 13.5" stroke="#2a62b8" stroke-width="2.4"/></svg>
<svg class="a" style="left:242px;top:553px" width="16" height="15" viewBox="0 0 16 15"><path d="M4 3V1.5h4V3" fill="none" stroke="#666"/><rect x="1" y="3" width="10" height="9" fill="#eeac4c"/><circle cx="11" cy="10.5" r="4.6" fill="#2e9e6a" stroke="#f3f3f3" stroke-width="0.8"/><path d="M11 8v5 M8.5 10.5h5" stroke="#fff" stroke-width="1.6"/></svg>
<svg class="a" style="left:258px;top:553px" width="16" height="15" viewBox="0 0 16 15"><path d="M1 3 L3 1 L7.5 5.5 L5.5 7.5z" fill="#a8a8a8"/><path d="M4 7.5 L8 3.5 L9.5 5 L5.5 9z" fill="#a8a8a8"/><path d="M5 10 L10.5 4.5 L14.5 8.5 L8 14.5z" fill="#bcbcbc"/></svg>
<span class="t" style="left:15px;top:569px;font-size:11px;color:#505050;transform:scaleX(0.9330);">Ticket</span>
<div class="a" style="left:80px;top:571px;width:145px;height:16px;background:#fff;box-shadow:inset 0 0 0 1px #c8c8c8;"></div>
<div class="a" style="left:210px;top:572px;width:14px;height:14px;background:#f4f4f4;"></div>
<div class="a" style="left:210px;top:572px;width:1px;height:14px;background:#d8d8d8;"></div>
<svg class="a" style="left:215px;top:577px" width="7" height="4" viewBox="0 0 7 4"><path d="M0.5 0.5h6l-3 3z" fill="#555"/></svg>
<div class="a" style="left:224px;top:571px;width:18px;height:16px;background:#f3f3f3;box-shadow:inset 0 0 0 1px #c4c4c4;"></div>
<div class="a" style="left:241px;top:571px;width:17px;height:16px;background:#f3f3f3;box-shadow:inset 0 0 0 1px #c4c4c4;"></div>
<div class="a" style="left:257px;top:571px;width:17px;height:16px;background:#f3f3f3;box-shadow:inset 0 0 0 1px #c4c4c4;"></div>
<svg class="a" style="left:225px;top:571px" width="16" height="15" viewBox="0 0 16 15"><circle cx="9.5" cy="6" r="4.3" fill="none" stroke="#2a62b8" stroke-width="1.9"/><path d="M6.5 9 L2 13.5" stroke="#2a62b8" stroke-width="2.4"/></svg>
<svg class="a" style="left:242px;top:571px" width="16" height="15" viewBox="0 0 16 15"><path d="M2 1v13" stroke="#555" stroke-width="1.4"/><path d="M3 1.5l7 3.5-7 3.5z" fill="#2a62b8"/><path d="M11 8.5v6 M8 11.5h6" stroke="#3a9d6e" stroke-width="1.8"/></svg>
<svg class="a" style="left:258px;top:571px" width="16" height="15" viewBox="0 0 16 15"><path d="M1 3 L3 1 L7.5 5.5 L5.5 7.5z" fill="#a8a8a8"/><path d="M4 7.5 L8 3.5 L9.5 5 L5.5 9z" fill="#a8a8a8"/><path d="M5 10 L10.5 4.5 L14.5 8.5 L8 14.5z" fill="#bcbcbc"/></svg>
<span class="t" style="left:15px;top:587px;font-size:11px;color:#505050;transform:scaleX(0.8940);">Parent</span>
<div class="a" style="left:80px;top:589px;width:145px;height:16px;background:#fff;box-shadow:inset 0 0 0 1px #c8c8c8;"></div>
<div class="a" style="left:210px;top:590px;width:14px;height:14px;background:#f4f4f4;"></div>
<div class="a" style="left:210px;top:590px;width:1px;height:14px;background:#d8d8d8;"></div>
<svg class="a" style="left:215px;top:595px" width="7" height="4" viewBox="0 0 7 4"><path d="M0.5 0.5h6l-3 3z" fill="#555"/></svg>
<div class="a" style="left:224px;top:589px;width:18px;height:16px;background:#f3f3f3;box-shadow:inset 0 0 0 1px #c4c4c4;"></div>
<div class="a" style="left:241px;top:589px;width:17px;height:16px;background:#f3f3f3;box-shadow:inset 0 0 0 1px #c4c4c4;"></div>
<div class="a" style="left:257px;top:589px;width:17px;height:16px;background:#f3f3f3;box-shadow:inset 0 0 0 1px #c4c4c4;"></div>
<svg class="a" style="left:225px;top:589px" width="16" height="15" viewBox="0 0 16 15"><circle cx="9.5" cy="6" r="4.3" fill="none" stroke="#2a62b8" stroke-width="1.9"/><path d="M6.5 9 L2 13.5" stroke="#2a62b8" stroke-width="2.4"/></svg>
<svg class="a" style="left:242px;top:589px" width="16" height="15" viewBox="0 0 16 15"><circle cx="10.5" cy="5" r="3.3" fill="none" stroke="#c4c4c4" stroke-width="2"/><path d="M8 7.5 L2 13.5 L3.5 14.5 L9.5 8.5z" fill="#c4c4c4"/></svg>
<svg class="a" style="left:258px;top:589px" width="16" height="15" viewBox="0 0 16 15"><path d="M1 3 L3 1 L7.5 5.5 L5.5 7.5z" fill="#a8a8a8"/><path d="M4 7.5 L8 3.5 L9.5 5 L5.5 9z" fill="#a8a8a8"/><path d="M5 10 L10.5 4.5 L14.5 8.5 L8 14.5z" fill="#bcbcbc"/></svg>
<span class="t" style="left:15px;top:605px;font-size:11px;color:#505050;transform:scaleX(0.8823);">Mots clés</span>
<div class="a" style="left:80px;top:607px;width:194px;height:16px;background:#fff;box-shadow:inset 0 0 0 1px #c8c8c8;"></div>
<div class="a" style="left:259px;top:608px;width:14px;height:14px;background:#f4f4f4;"></div>
<div class="a" style="left:259px;top:608px;width:1px;height:14px;background:#d8d8d8;"></div>
<svg class="a" style="left:264px;top:613px" width="7" height="4" viewBox="0 0 7 4"><path d="M0.5 0.5h6l-3 3z" fill="#555"/></svg>
<span class="t" style="left:82px;top:605px;font-size:11px;color:#222;transform:scaleX(0.7872);">Aucune sélection</span>
<div class="a" style="left:284px;top:134px;width:527px;height:550px;box-shadow:inset 0 0 0 1px #cbcbcb;"></div>
<div class="a" style="left:287px;top:134px;width:32px;height:1px;background:#f1f1f1;"></div>
<span class="t" style="left:291px;top:125px;font-size:10px;color:#555;transform:scaleX(0.8606);">Détail</span>
<div class="a" style="left:284px;top:683px;width:527px;height:1px;background:#f1f1f1;"></div>
<div class="a" style="left:292px;top:145px;width:487px;height:259px;background:#c4c4c4;"></div>
<div class="a" style="left:293px;top:146px;width:484px;height:255px;background:#fafafa;"></div>
<div class="a" style="left:294px;top:147px;width:483px;height:254px;background:#a8a8a8;"></div>
<div class="a" style="left:296px;top:149px;width:481px;height:252px;background:#fff;"></div>
<span class="t" style="left:303px;top:145px;font-size:11px;color:#222;transform:scaleX(0.9161);">Bonjour,</span>
<span class="t" style="left:303px;top:170px;font-size:11px;color:#222;transform:scaleX(0.8992);">Merci de valider l'astuce que vous allez recevoir.</span>
<span class="t" style="left:303px;top:194px;font-size:11px;color:#222;transform:scaleX(0.9270);">Cordialement,</span>
<div class="a" style="left:292px;top:424px;width:510px;height:118px;box-shadow:inset 0 0 0 1px #cbcbcb;"></div>
<div class="a" style="left:295px;top:424px;width:60px;height:1px;background:#f1f1f1;"></div>
<span class="t" style="left:300px;top:415px;font-size:10px;color:#555;transform:scaleX(0.8731);">Fichiers Liés</span>
<div class="a" style="left:292px;top:552px;width:267px;height:73px;box-shadow:inset 0 0 0 1px #cbcbcb;"></div>
<div class="a" style="left:295px;top:552px;width:39px;height:1px;background:#f1f1f1;"></div>
<span class="t" style="left:300px;top:543px;font-size:10px;color:#555;transform:scaleX(0.8836);">Source</span>
<span class="t" style="left:300px;top:562px;font-size:11px;color:#505050;transform:scaleX(0.8602);">Source</span>
<div class="a" style="left:372px;top:564px;width:160px;height:16px;background:#fff;box-shadow:inset 0 0 0 1px #c8c8c8;"></div>
<div class="a" style="left:517px;top:565px;width:14px;height:14px;background:#f4f4f4;"></div>
<div class="a" style="left:517px;top:565px;width:1px;height:14px;background:#d8d8d8;"></div>
<svg class="a" style="left:522px;top:570px" width="7" height="4" viewBox="0 0 7 4"><path d="M0.5 0.5h6l-3 3z" fill="#555"/></svg>
<span class="t" style="left:374px;top:562px;font-size:11px;color:#222;transform:scaleX(0.7519);">HOUGUET Marianne</span>
<div class="a" style="left:534px;top:563px;width:18px;height:18px;background:#f3f3f3;box-shadow:inset 0 0 0 1px #c4c4c4;"></div>
<svg class="a" style="left:535px;top:564px" width="16" height="16" viewBox="0 0 16 16"><circle cx="9" cy="3.5" r="2.4" fill="#8b3fb0"/><path d="M5.5 9 C5.5 6.5 7 6 9 6 C11 6 12.5 6.5 12.5 9z" fill="#8b3fb0"/><circle cx="5" cy="5.5" r="2.2" fill="#2a62b8"/><path d="M1.5 10 C1.5 8 3 7.5 5 7.5 C7 7.5 8 8 8 10z" fill="#2a62b8"/><path d="M2 13h12 M4.5 10.5L2 13l2.5 2.5 M11.5 10.5L14 13l-2.5 2.5" stroke="#3a9d6e" stroke-width="1.4" fill="none"/></svg>
<span class="t" style="left:300px;top:580px;font-size:11px;color:#505050;transform:scaleX(0.8054);">Saisie le</span>
<div class="a" style="left:372px;top:582px;width:161px;height:16px;background:#fff;box-shadow:inset 0 0 0 1px #c8c8c8;"></div>
<span class="t" style="left:374px;top:580px;font-size:11px;color:#222;transform:scaleX(0.8435);">01/06/2021</span>
<svg class="a" style="left:516px;top:582px" width="16" height="16" viewBox="0 0 16 16"><rect x="1.5" y="2.5" width="13" height="12" fill="#fff" stroke="#666"/><rect x="1" y="2" width="14" height="3" fill="#d9482b"/><path d="M4 0.5v3 M12 0.5v3" stroke="#888"/><text x="8" y="13.5" font-size="8" font-weight="bold" font-family="Liberation Sans" text-anchor="middle" fill="#333">23</text></svg>
<div class="a" style="left:303px;top:603px;width:10px;height:10px;background:#f4f4f4;box-shadow:inset 0 0 0 1px #d8d8d8;"></div>
<span class="t" style="left:316px;top:598px;font-size:10px;color:#b4b4b4;transform:scaleX(0.8660);">Seule la source peut historiser</span>
<div class="a" style="left:454px;top:603px;width:10px;height:10px;background:#f4f4f4;box-shadow:inset 0 0 0 1px #d8d8d8;"></div>
<span class="t" style="left:466px;top:598px;font-size:10px;color:#b4b4b4;transform:scaleX(0.8740);">Source modif</span>
<div class="a" style="left:560px;top:552px;width:243px;height:74px;box-shadow:inset 0 0 0 1px #cbcbcb;"></div>
<div class="a" style="left:563px;top:552px;width:37.5px;height:1px;background:#f1f1f1;"></div>
<span class="t" style="left:568px;top:543px;font-size:10px;color:#555;transform:scaleX(0.8367);">Alarme</span>
<span class="t" style="left:568px;top:562px;font-size:11px;color:#505050;transform:scaleX(0.8610);">Alarme</span>
<div class="a" style="left:603px;top:564px;width:161px;height:16px;background:#fff;box-shadow:inset 0 0 0 1px #c8c8c8;"></div>
<svg class="a" style="left:747px;top:564px" width="16" height="16" viewBox="0 0 16 16"><rect x="1.5" y="2.5" width="13" height="12" fill="#fff" stroke="#666"/><rect x="1" y="2" width="14" height="3" fill="#d9482b"/><path d="M4 0.5v3 M12 0.5v3" stroke="#888"/><text x="8" y="13.5" font-size="8" font-weight="bold" font-family="Liberation Sans" text-anchor="middle" fill="#333">23</text></svg>
<div class="a" style="left:765px;top:563px;width:18px;height:18px;background:#f3f3f3;box-shadow:inset 0 0 0 1px #c4c4c4;"></div>
<svg class="a" style="left:766px;top:564px" width="16" height="16" viewBox="0 0 16 16"><path d="M2 12 C3 10 3 6 5 4 C6 2.5 8 2.5 9 4 C10.5 6 10 10 12 12z" fill="#eeac4c"/><circle cx="11" cy="11" r="4.6" fill="#2e9e6a" stroke="#f3f3f3" stroke-width="0.8"/><path d="M11 8.5v5 M8.5 11h5" stroke="#fff" stroke-width="1.6"/></svg>
<span class="t" style="left:568px;top:580px;font-size:11px;color:#505050;transform:scaleX(0.8897);">Priorité</span>
<div class="a" style="left:603px;top:582px;width:161px;height:16px;background:#fff;box-shadow:inset 0 0 0 1px #c8c8c8;"></div>
<div class="a" style="left:748px;top:583px;width:15px;height:14px;background:#f4f4f4;"></div>
<div class="a" style="left:748px;top:583px;width:1px;height:14px;background:#d8d8d8;"></div>
<svg class="a" style="left:753px;top:588px" width="7" height="4" viewBox="0 0 7 4"><path d="M0.5 0.5h6l-3 3z" fill="#555"/></svg>
<span class="t" style="left:621px;top:580px;font-size:11px;color:#222;transform:scaleX(0.7699);">Normale</span>
<div class="a" style="left:292px;top:635px;width:511px;height:39px;box-shadow:inset 0 0 0 1px #cbcbcb;"></div>
<div class="a" style="left:295px;top:635px;width:35px;height:1px;background:#f1f1f1;"></div>
<span class="t" style="left:300px;top:626px;font-size:10px;color:#555;transform:scaleX(0.8472);">Divers</span>
<span class="t" style="left:300px;top:646px;font-size:11px;color:#505050;transform:scaleX(0.9202);">% avancement</span>
<div class="a" style="left:372px;top:647px;width:43px;height:16px;background:#fff;box-shadow:inset 0 0 0 1px #c8c8c8;"></div>
<div class="a" style="left:400px;top:648px;width:14px;height:14px;background:#f4f4f4;"></div>
<div class="a" style="left:400px;top:648px;width:1px;height:14px;background:#d8d8d8;"></div>
<svg class="a" style="left:405px;top:649px" width="7" height="11" viewBox="0 0 7 11"><path d="M0.5 3.5h6l-3-3z M0.5 7.5h6l-3 3z" fill="#555"/></svg>
<span class="t" style="left:374px;top:646px;font-size:11px;color:#222;transform:scaleX(0.8435);">0 %</span>
<span class="t" style="left:417px;top:646px;font-size:11px;color:#a0a0a0;transform:scaleX(0.8796);">code</span>
<div class="a" style="left:442px;top:648px;width:77px;height:15px;background:#f1f1f1;box-shadow:inset 0 0 0 1px #cccccc;"></div>
<span class="t" style="left:444px;top:645px;font-size:11px;color:#b0b0b0;transform:scaleX(0.7592);">187707COB</span>
<div class="a" style="left:292px;top:675px;width:511px;height:9px;box-shadow:inset 0 0 0 1px #c4c4c4;"></div>
<div class="a" style="left:293px;top:676px;width:509px;height:1px;background:#dcdcdc;"></div>
<div class="a" style="left:292px;top:684px;width:511px;height:1px;background:#f1f1f1;"></div>
</body></html>
